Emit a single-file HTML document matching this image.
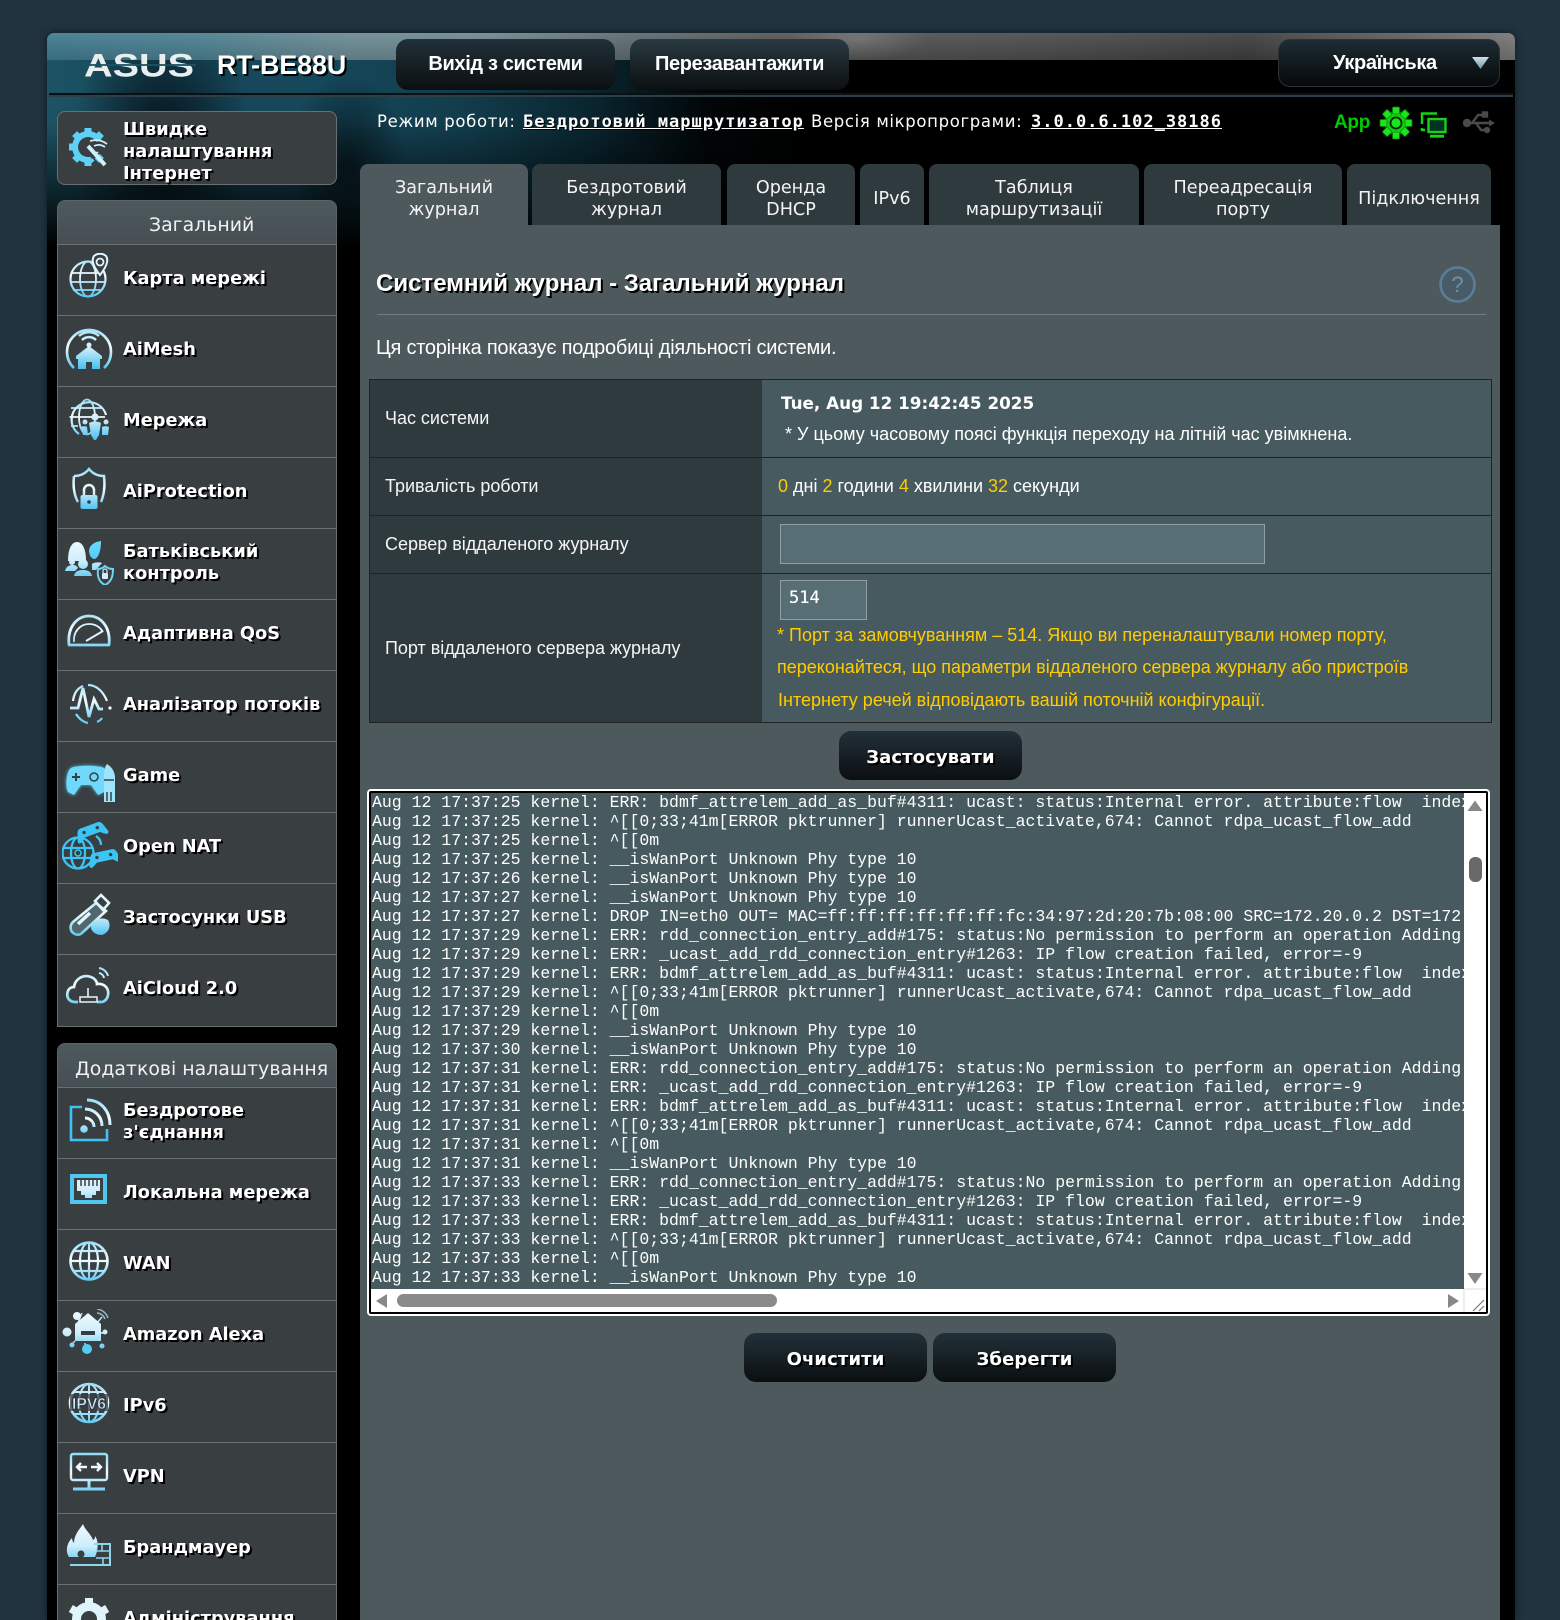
<!DOCTYPE html>
<html lang="uk"><head><meta charset="utf-8"><title>RT-BE88U</title>
<style>
html,body{margin:0;padding:0;width:1560px;height:1620px;overflow:hidden}
body{background:#21333e;position:relative;font-family:"Liberation Sans",sans-serif;color:#fff}
#root{position:absolute;left:0;top:0;width:1560px;height:1620px;overflow:hidden}
.a{position:absolute;white-space:nowrap}
#wrap{position:absolute;left:47px;top:33px;width:1468px;height:1587px;background:#000;border-radius:7px 7px 0 0;box-shadow:0 0 8px #101c24;overflow:hidden}
#b1{position:absolute;left:0;top:0;width:1468px;height:260px;background:
radial-gradient(ellipse 90px 130px at 115px 110px,rgba(3,12,18,.9),rgba(3,12,18,0) 100%),
radial-gradient(ellipse 60px 90px at 300px 130px,rgba(0,0,0,.6),rgba(0,0,0,0)),
linear-gradient(90deg,#1c5364 0,#174658 120px,#15485b 280px,#123c4b 420px,#0a2630 540px,#020608 660px,#000 760px);
-webkit-mask-image:linear-gradient(180deg,#000 90px,rgba(0,0,0,.5) 150px,rgba(0,0,0,0) 215px);}
#b2{position:absolute;left:0;top:0;width:1468px;height:27px;background:
linear-gradient(180deg,rgba(255,255,255,.08),rgba(0,0,0,.12)),
radial-gradient(ellipse 70px 22px at 810px 6px,rgba(255,255,255,.16),rgba(255,255,255,0)),
linear-gradient(90deg,#3f7a8f 0,#4b7f90 150px,#6b8a93 300px,#6e878e 440px,#5f6e73 560px,#555 720px,#4b4b4b 1000px,#3d3d3d 1200px,#6f6f6f 1440px,#777 100%)}
#ln{position:absolute;left:2px;width:1464px;top:60px;height:2px;background:#0a1114;border-bottom:2px solid #2e3e46}
.btn{position:absolute;background:linear-gradient(180deg,#223039,#0b0f11);border-radius:12px;display:flex;align-items:center;justify-content:center;font-weight:bold;box-sizing:border-box}
.h{font-size:20px;letter-spacing:-.35px}
.v{font-family:"DejaVu Sans",sans-serif;font-size:18px;text-shadow:1px 1px 1px #000,2px 2px 0 #000;letter-spacing:.1px;padding-top:3px}
.tab{position:absolute;top:164px;height:61px;box-sizing:border-box;padding-top:9px;background:#2f3a3e;border-radius:8px 8px 0 0;display:flex;align-items:center;justify-content:center;text-align:center;font:17.6px/22px "DejaVu Sans",sans-serif;color:#f4f4f4}
#tact{background:#4d595d}
#main{position:absolute;left:360px;top:225px;width:1140px;height:1395px;background:#4d595d}
.sb{position:absolute;left:57px;width:280px;box-sizing:border-box;border:1px solid #6a6f72;background:#393e41}
.hd{position:absolute;left:57px;width:280px;box-sizing:border-box;border:1px solid #5c6367;border-bottom:1px solid #7a8084;border-radius:8px 8px 0 0;background:linear-gradient(180deg,#4d595d,#464f53);color:#f2f2f2;font:18.9px "DejaVu Sans",sans-serif}
.row{position:absolute;left:57px;width:280px;height:71px;box-sizing:border-box;border-top:1px solid #6b6f71}
.row b,.qt{position:absolute;left:66px;top:0;height:67px;display:flex;align-items:center;font:bold 17.8px/22px "DejaVu Sans",sans-serif;text-shadow:1px 1px 0 #000,2px 2px 0 #000;white-space:nowrap}
.row svg,.qi{position:absolute;left:8px;top:8px}
.cl{position:absolute;left:369px;width:394px;background:#2f3a3f;box-sizing:border-box;border:1px solid #222;display:flex;align-items:center;padding-left:15px;font-size:18px;letter-spacing:-.02px;color:#f5f5f5}
.cr{position:absolute;left:762px;width:730px;background:#475a5f;box-sizing:border-box;border:1px solid #222;border-left:0}
.t{font-size:18px;letter-spacing:0;color:#fff}
.y,.t.y,.t .y{color:#fc0}
.inp{position:absolute;background:#576e74;border:1px solid #929ea1;box-sizing:border-box}
#lb{position:absolute;left:367px;top:789px;width:1123px;height:527px;box-sizing:border-box;border:2px solid #fff;border-radius:4px;background:#000}
#li{position:absolute;left:2px;top:2px;width:1115px;height:519px;background:#fff;overflow:hidden}
#lt{position:absolute;left:0;top:0;width:1093px;height:496px;background:#475a5f;overflow:hidden;font:16.5px/19px "Liberation Mono",monospace;color:#fff;white-space:pre;padding:0}
#lt div{padding-left:1px;position:relative;top:0}
</style></head><body><div id="root">
<svg width="0" height="0" style="position:absolute"><defs>
<linearGradient id="g" gradientUnits="userSpaceOnUse" x1="0" y1="2" x2="0" y2="46"><stop offset="0" stop-color="#8fdcf5"/><stop offset=".45" stop-color="#f2fbff"/><stop offset="1" stop-color="#49c3f2"/></linearGradient>
<linearGradient id="gw" gradientUnits="userSpaceOnUse" x1="0" y1="2" x2="0" y2="46"><stop offset="0" stop-color="#eefaff"/><stop offset=".5" stop-color="#cfeefb"/><stop offset="1" stop-color="#3fbef0"/></linearGradient>
<linearGradient id="gc" gradientUnits="userSpaceOnUse" x1="0" y1="2" x2="0" y2="46"><stop offset="0" stop-color="#6fdcff"/><stop offset="1" stop-color="#2fb8ef"/></linearGradient>
</defs></svg>

<div id="wrap"><div id="b1"></div><div id="b2"></div><div id="ln"></div></div>

<!-- header -->
<svg class="a" style="left:84px;top:52px" width="112" height="28" viewBox="0 0 112 28"><text x="0" y="24.5" font-family="Liberation Sans" font-weight="bold" font-size="32" textLength="110" lengthAdjust="spacingAndGlyphs" fill="#e9eeef">ASUS</text><rect x="0" y="12" width="112" height="2" fill="#1c5364" opacity=".9"/></svg>
<div class="a" style="left:217px;top:48px;font-weight:bold;font-size:26.8px;line-height:34px;text-shadow:2px 2px 0 #000;letter-spacing:-.05px">RT-BE88U</div>
<div class="btn h" style="left:396px;top:39px;width:219px;height:51px;">Вихід з системи</div>
<div class="btn h" style="left:630px;top:39px;width:219px;height:51px;background:linear-gradient(180deg,#2a3a42,#0b0f11)">Перезавантажити</div>
<div class="btn h" style="left:1278px;top:39px;width:222px;height:48px;border:1px solid #2b3338;padding-right:0;background:linear-gradient(180deg,#1d2c33,#06090a);"><span style="position:absolute;left:54px;top:12px;">Українська</span></div>
<svg class="a" style="left:1472px;top:56px" width="18" height="14"><defs><linearGradient id="tr" x1="0" y1="0" x2="0" y2="1"><stop offset="0" stop-color="#cfe0ea"/><stop offset="1" stop-color="#6f95a8"/></linearGradient></defs><path d="M0 1H17L8.5 13Z" fill="url(#tr)"/></svg>

<div class="a" style="left:377px;top:111px;font:16.5px/22px 'DejaVu Sans',sans-serif;letter-spacing:.65px">Режим роботи:</div>
<div class="a" style="left:523px;top:111px;font:bold 17px/22px 'DejaVu Sans Mono',monospace;letter-spacing:1px;text-decoration:underline;text-shadow:1px 1px 0 #000">Бездротовий маршрутизатор</div>
<div class="a" style="left:811px;top:111px;font:16.5px/22px 'DejaVu Sans',sans-serif;letter-spacing:.65px">Версія мікропрограми:</div>
<div class="a" style="left:1031px;top:111px;font:bold 17px/22px 'DejaVu Sans Mono',monospace;letter-spacing:1px;text-decoration:underline">3.0.0.6.102_38186</div>
<div class="a" style="left:1334px;top:111px;font:bold 19px/24px 'Liberation Sans',sans-serif;color:#0c0;letter-spacing:-.3px">App</div>
<svg class="a" style="left:1379px;top:106px" width="34" height="34" viewBox="0 0 34 34"><g transform="translate(17 17)"><g fill="#1be51b" stroke="#0a7a0a" stroke-width=".8"><circle r="11.5"/><rect x="-3.5" y="-16" width="7" height="7" rx="1"/><rect x="-3.5" y="-16" width="7" height="7" rx="1" transform="rotate(45)"/><rect x="-3.5" y="-16" width="7" height="7" rx="1" transform="rotate(90)"/><rect x="-3.5" y="-16" width="7" height="7" rx="1" transform="rotate(135)"/><rect x="-3.5" y="-16" width="7" height="7" rx="1" transform="rotate(180)"/><rect x="-3.5" y="-16" width="7" height="7" rx="1" transform="rotate(225)"/><rect x="-3.5" y="-16" width="7" height="7" rx="1" transform="rotate(270)"/><rect x="-3.5" y="-16" width="7" height="7" rx="1" transform="rotate(315)"/></g><circle r="8.2" fill="#0ccc0c"/><circle r="6.4" fill="#032503"/><circle r="4.6" fill="#1be51b"/></g></svg>
<svg class="a" style="left:1420px;top:110px" width="30" height="28" viewBox="0 0 30 28" fill="none" stroke="#17d217" stroke-width="2.4"><path d="M2 14V3.5H17"/><path d="M2 18v2h3" /><rect x="8.5" y="9" width="17" height="13" fill="#032"/><path d="M10 26.2H24" stroke-width="3"/></svg>
<svg class="a" style="left:1463px;top:110px" width="33" height="26" viewBox="0 0 33 26" fill="none" stroke="#4a4a4a" stroke-width="2.4"><path d="M4 13H28"/><path d="M9 13L15 5H20M13 13l5 7h4"/><circle cx="4" cy="13" r="3" fill="#4a4a4a"/><rect x="20" y="2.5" width="4" height="4" fill="#4a4a4a"/><circle cx="24" cy="20" r="2" fill="#4a4a4a"/><path d="M26 9.5L32 13l-6 3.5Z" fill="#4a4a4a" stroke="none"/></svg>

<!-- tabs -->
<div id="main"></div>
<div class="tab" id="tact" style="left:360px;width:168px">Загальний<br>журнал</div>
<div class="tab" style="left:532px;width:189px">Бездротовий<br>журнал</div>
<div class="tab" style="left:727px;width:128px">Оренда<br>DHCP</div>
<div class="tab" style="left:860px;width:64px">IPv6</div>
<div class="tab" style="left:929px;width:210px">Таблиця<br>маршрутизації</div>
<div class="tab" style="left:1144px;width:198px">Переадресація<br>порту</div>
<div class="tab" style="left:1347px;width:144px">Підключення</div>

<!-- content -->
<div class="a" style="left:376px;top:268px;font-weight:bold;font-size:24px;line-height:32px;text-shadow:1px 1px 0 #000,2px 2px 0 #000;letter-spacing:0">Системний журнал - Загальний журнал</div>
<svg class="a" style="left:1439px;top:266px" width="37" height="37"><circle cx="18.500" cy="18.500" r="17" fill="#4a5b68" stroke="#5c7d96" stroke-width="2.600"/><text x="18.500" y="26" text-anchor="middle" font-family="Liberation Sans" font-size="22" fill="#6f92aa">?</text></svg>
<div class="a" style="left:377px;top:314px;width:1109px;height:1px;background:#6f7b80"></div>
<div class="a" style="left:376px;top:336px;font-size:20px;line-height:24px;letter-spacing:-.24px;color:#fff">Ця сторінка показує подробиці діяльності системи.</div>

<div class="cl" style="top:379px;height:79px">Час системи</div>
<div class="cr" style="top:379px;height:79px;border-top:1px solid #222"></div>
<div class="a" style="left:781px;top:392px;font:bold 16.8px/22px 'DejaVu Sans',sans-serif">Tue, Aug 12 19:42:45 2025</div>
<div class="a t" style="left:785px;top:423px;line-height:22px">* У цьому часовому поясі функція переходу на літній час увімкнена.</div>
<div class="cl" style="top:457px;height:59px">Тривалість роботи</div>
<div class="cr" style="top:457px;height:59px;border-top:1px solid #222"></div>
<div class="a t" style="left:778px;top:475px;line-height:22px"><span class="y">0</span> дні <span class="y">2</span> години <span class="y">4</span> хвилини <span class="y">32</span> секунди</div>
<div class="cl" style="top:515px;height:59px">Сервер віддаленого журналу</div>
<div class="cr" style="top:515px;height:59px;border-top:1px solid #222"></div>
<div class="inp" style="left:780px;top:524px;width:485px;height:40px"></div>
<div class="cl" style="top:573px;height:150px">Порт віддаленого сервера журналу</div>
<div class="cr" style="top:573px;height:150px;border-top:1px solid #222"></div>
<div class="inp" style="left:780px;top:580px;width:87px;height:40px"></div>
<div class="a" style="left:789px;top:587px;font:17px/22px 'DejaVu Sans Mono',monospace;text-shadow:0 0 .4px #fff">514</div>
<div class="a t y" style="left:777px;top:624px;line-height:22px">* Порт за замовчуванням – 514. Якщо ви переналаштували номер порту,</div>
<div class="a t y" style="left:777px;top:656px;line-height:22px">переконайтеся, що параметри віддаленого сервера журналу або пристроїв</div>
<div class="a t y" style="left:778px;top:689px;line-height:22px">Інтернету речей відповідають вашій поточній конфігурації.</div>

<div class="btn v" style="left:839px;top:731px;width:183px;height:49px">Застосувати</div>

<div id="lb"><div id="li"><div id="lt"><div>Aug 12 17:37:25 kernel: ERR: bdmf_attrelem_add_as_buf#4311: ucast: status:Internal error. attribute:flow  index:0
Aug 12 17:37:25 kernel: ^[[0;33;41m[ERROR pktrunner] runnerUcast_activate,674: Cannot rdpa_ucast_flow_add
Aug 12 17:37:25 kernel: ^[[0m
Aug 12 17:37:25 kernel: __isWanPort Unknown Phy type 10
Aug 12 17:37:26 kernel: __isWanPort Unknown Phy type 10
Aug 12 17:37:27 kernel: __isWanPort Unknown Phy type 10
Aug 12 17:37:27 kernel: DROP IN=eth0 OUT= MAC=ff:ff:ff:ff:ff:ff:fc:34:97:2d:20:7b:08:00 SRC=172.20.0.2 DST=172.20.0.255
Aug 12 17:37:29 kernel: ERR: rdd_connection_entry_add#175: status:No permission to perform an operation Adding
Aug 12 17:37:29 kernel: ERR: _ucast_add_rdd_connection_entry#1263: IP flow creation failed, error=-9
Aug 12 17:37:29 kernel: ERR: bdmf_attrelem_add_as_buf#4311: ucast: status:Internal error. attribute:flow  index:0
Aug 12 17:37:29 kernel: ^[[0;33;41m[ERROR pktrunner] runnerUcast_activate,674: Cannot rdpa_ucast_flow_add
Aug 12 17:37:29 kernel: ^[[0m
Aug 12 17:37:29 kernel: __isWanPort Unknown Phy type 10
Aug 12 17:37:30 kernel: __isWanPort Unknown Phy type 10
Aug 12 17:37:31 kernel: ERR: rdd_connection_entry_add#175: status:No permission to perform an operation Adding
Aug 12 17:37:31 kernel: ERR: _ucast_add_rdd_connection_entry#1263: IP flow creation failed, error=-9
Aug 12 17:37:31 kernel: ERR: bdmf_attrelem_add_as_buf#4311: ucast: status:Internal error. attribute:flow  index:0
Aug 12 17:37:31 kernel: ^[[0;33;41m[ERROR pktrunner] runnerUcast_activate,674: Cannot rdpa_ucast_flow_add
Aug 12 17:37:31 kernel: ^[[0m
Aug 12 17:37:31 kernel: __isWanPort Unknown Phy type 10
Aug 12 17:37:33 kernel: ERR: rdd_connection_entry_add#175: status:No permission to perform an operation Adding
Aug 12 17:37:33 kernel: ERR: _ucast_add_rdd_connection_entry#1263: IP flow creation failed, error=-9
Aug 12 17:37:33 kernel: ERR: bdmf_attrelem_add_as_buf#4311: ucast: status:Internal error. attribute:flow  index:0
Aug 12 17:37:33 kernel: ^[[0;33;41m[ERROR pktrunner] runnerUcast_activate,674: Cannot rdpa_ucast_flow_add
Aug 12 17:37:33 kernel: ^[[0m
Aug 12 17:37:33 kernel: __isWanPort Unknown Phy type 10</div></div>
<svg style="position:absolute;left:0;top:0" width="1115" height="519">
<path d="M1096.500 18L1104 7.500L1111.500 18Z" fill="#888"/>
<rect x="1098" y="64" width="13" height="25" rx="6" fill="#696969"/>
<path d="M1096.500 480L1104 491L1111.500 480Z" fill="#888"/>
<path d="M16 503L5 510L16 517V503Z" fill="#888" transform="translate(0,-2)"/>
<rect x="26" y="501" width="380" height="13" rx="6.500" fill="#8a8a8a"/>
<path d="M1077 501L1088 508L1077 515Z" fill="#888"/>
<path d="M1093 496H1115M1093 496V519" stroke="#ddd" fill="none"/>
<path d="M1102 518L1113 507M1108 518L1113 513" stroke="#777" stroke-width="1.200" fill="none"/>
</svg>
</div></div>

<div class="btn v" style="left:744px;top:1333px;width:183px;height:49px">Очистити</div>
<div class="btn v" style="left:933px;top:1333px;width:183px;height:49px">Зберегти</div>

<!-- sidebar -->
<div class="sb" style="top:111px;height:74px;border-radius:8px"></div>
<svg class="a" style="left:68px;top:124px" width="48" height="48" viewBox="0 0 48 48" fill="none"><g transform="translate(20 23)" fill="#5fd0f7"><path d="M11.300-6.500A13 13 0 1 0 3.400 12.600" stroke="#5fd0f7" stroke-width="6" fill="none"/><rect x="-3.500" y="-19" width="7" height="6"/><rect x="-3.500" y="-19" width="7" height="6" transform="rotate(45)"/><rect x="-3.500" y="-19" width="7" height="6" transform="rotate(-45)"/><rect x="-3.500" y="-19" width="7" height="6" transform="rotate(-90)"/><rect x="-3.500" y="-19" width="7" height="6" transform="rotate(-135)"/><rect x="-3.500" y="-19" width="7" height="6" transform="rotate(180)"/><rect x="-3.500" y="-19" width="7" height="6" transform="rotate(135)"/></g><path d="M22 17c7-2 13 0 17 3M26 22c4-2 8-1 11 1M30 28l-4 3" stroke="#cfeffb" stroke-width="1.800"/><path d="M20 22L37 41" stroke="#cfeffb" stroke-width="4"/><path d="M24 34l2.500 2.500L24 39l-2.500-2.500Z" fill="#5fd0f7"/></svg>
<div class="qt" style="left:123px;top:119px;height:66px">Швидке<br>налаштування<br>Інтернет</div>

<div class="hd" style="top:200px;height:45px;line-height:49px;padding-left:91px">Загальний</div>
<div class="sb" style="top:244px;height:783px;border-top:0"></div>

<div class="row" style="top:244px"><svg width="48" height="48" viewBox="0 0 48 48" fill="none" stroke="url(#g)" stroke-width="1.800"><circle cx="23" cy="26" r="17.500" stroke-width="2.200"/><ellipse cx="23" cy="26" rx="8" ry="17.500"/><path d="M6 20H33M5.500 29H40M8 37H37"/><path d="M29 3a9 9 0 0 1 12 0c3 4 1 10-6 19c-7-9-9-15-6-19Z" fill="#393e41" stroke="#dff6ff" stroke-width="2"/><circle cx="35" cy="9" r="3.500" stroke="#dff6ff"/></svg><b>Карта мережі</b></div>

<div class="row" style="top:315px"><svg width="48" height="48" viewBox="0 0 48 48" fill="none" stroke="url(#g)" stroke-width="2.500"><path d="M9 44A22 22 0 1 1 39 44" stroke-width="2.600"/><path d="M17 16a10 10 0 0 1 14 0M14 12a15 15 0 0 1 20 0"/><circle cx="24" cy="21" r="2.500" fill="url(#gw)" stroke="none"/><path d="M24 22L37 32V35H35V45H27V38H21V45H13V35H11V32Z" fill="url(#gw)" stroke="none"/></svg><b>AiMesh</b></div>

<div class="row" style="top:386px"><svg width="48" height="48" viewBox="0 0 48 48" fill="none" stroke="url(#g)" stroke-width="1.800"><path d="M14 39A17.500 17.500 0 1 1 41 20" stroke-width="2.200"/><ellipse cx="22" cy="22" rx="8" ry="17.500"/><path d="M4.500 22H40M6 13H37M6 31H13"/><g fill="url(#gw)" stroke="none"><circle cx="30" cy="22" r="3.600"/><path d="M24 28c3-2 9-2 12 0l-2 12-3 5h-2l-3-5Z"/><circle cx="20" cy="27" r="2.500"/><path d="M16 32c1-1 5-1 6 0l1 8h-5Z"/><circle cx="41" cy="27" r="2.500"/><path d="M37 32c1-1 6-1 7 0l-1 8h-6Z"/></g></svg><b>Мережа</b></div>

<div class="row" style="top:457px"><svg width="48" height="48" viewBox="0 0 48 48" fill="none" stroke="url(#g)" stroke-width="2.500"><path d="M9 10c6 0 11-2 15-7c4 5 9 7 15 7c1 9 0 19-3 26M9 10c-1 9 0 19 4 26"/><path d="M19 30v-6a5 5 0 0 1 10 0v6"/><rect x="15.500" y="29" width="17" height="14" rx="2" fill="url(#gw)" stroke="none"/><circle cx="24" cy="36" r="1.800" fill="#393e41" stroke="none"/></svg><b>AiProtection</b></div>

<div class="row" style="top:528px"><svg width="50" height="48" viewBox="0 0 50 48" fill="none"><g fill="url(#gw)"><path d="M3 24c0-13 4-19 9-19s9 6 9 19Z"/><path d="M24 13c1-5 5-8 12-9c0 9-2 16-6 18c-4 0-6-4-6-9Z" fill="url(#gc)"/><path d="M0 34c1-5 5-6 8-6c2 0 4 1 5 3l-3 3Z"/><circle cx="7" cy="25" r="3"/><circle cx="18" cy="27" r="5"/><path d="M9 39c1-5 5-6 9-6s8 1 9 6Z"/><path d="M27 27c2-2 8-2 10-1l-6 7h-4Z"/></g><path d="M33 32c3 0 5-1 7-3c2 2 5 3 8 3c0 8-2 13-8 16c-6-3-8-8-7-16Z" fill="#393e41" stroke="#6fd3f5" stroke-width="2"/><rect x="37" y="36" width="6" height="6" rx="1" fill="#cfeefb"/><path d="M38 36v-2a2 2 0 0 1 4 0v2" stroke="#cfeefb" stroke-width="1.200"/></svg><b>Батьківський<br>контроль</b></div>

<div class="row" style="top:599px"><svg width="48" height="48" viewBox="0 0 48 48" fill="none" stroke="url(#g)" stroke-width="2.800"><path d="M4 37C2 18 13 8 24 8s22 10 20 29Z" stroke-linejoin="round"/><path d="M9 34c-1-10 6-18 15-18c6 0 11 3 14 8" stroke-width="1.800"/><path d="M21 33L38 23" stroke="#dff6ff" stroke-width="2"/></svg><b>Адаптивна QoS</b></div>

<div class="row" style="top:670px"><svg width="48" height="48" viewBox="0 0 48 48" fill="none" stroke="url(#g)" stroke-width="2.200"><path d="M5 29H13L18 9L24 38L29 20L34 30H38" stroke-width="2.800"/><path d="M23 6c8 0 15 6 19 16M11 35c2 3 6 8 12 9M8 22C9 14 13 9 18 7M32 43c2-1 4-2 5-4" /><circle cx="45" cy="29" r="1.600" fill="#fff" stroke="none"/></svg><b>Аналізатор потоків</b></div>

<div class="row" style="top:741px"><svg width="56" height="54" viewBox="0 0 56 54" style="left:4px"><defs><filter id="bl" x="-20%" y="-20%" width="140%" height="140%"><feGaussianBlur stdDeviation="1.800"/></filter></defs><g transform="translate(0 4)"><path d="M10 14c5-3 28-3 33 0c3 4 3 18 0 24l-6 3-7-10H20l-7 10-6-3C4 32 5 18 10 14Z" fill="#4fc9ef" filter="url(#bl)"/><path d="M10 14c5-3 28-3 33 0c3 4 3 18 0 24l-6 3-7-10H20l-7 10-6-3C4 32 5 18 10 14Z" fill="#6fd8fb"/><path d="M15 19v8M11 23h8" stroke="#393e41" stroke-width="2"/><circle cx="33" cy="23" r="4" fill="none" stroke="#393e41" stroke-width="1.500"/></g><path d="M46 14c5 3 8 8 8 14v24H43V28c0-6 0-10 3-14Z" fill="#9fe4fa"/><path d="M43 30h10M46 42v9M50 42v9" stroke="#393e41" stroke-width="1.500"/></svg><b>Game</b></div>

<div class="row" style="top:812px"><svg width="56" height="50" viewBox="0 0 56 50" style="left:5px"><g fill="none" stroke="#3cc4f5" stroke-width="2.300"><circle cx="16" cy="32" r="15.500"/><ellipse cx="16" cy="32" rx="7" ry="15.500"/><path d="M1 27H31M1 37H31"/><path d="M34 15c3 2 5 5 5 9"/></g><circle cx="16" cy="32" r="3" fill="none" stroke="#3cc4f5" stroke-width="1.500"/><g fill="#3cc4f5" transform="translate(29 10) rotate(-20)"><path d="M-9-6H9c3 0 4 2 5 5l2 6c1 3-2 4-4 2l-4-3H-8l-4 3c-2 2-5 1-4-2l2-6c1-3 2-5 5-5Z"/><circle cx="-7" cy="-1" r="1.700" fill="#393e41"/><circle cx="7" cy="-1" r="1.700" fill="#393e41"/></g><g fill="#3cc4f5" transform="translate(42 36) rotate(-12)"><path d="M-9-6H9c3 0 4 2 5 5l2 6c1 3-2 4-4 2l-4-3H-8l-4 3c-2 2-5 1-4-2l2-6c1-3 2-5 5-5Z"/><circle cx="-7" cy="-1" r="1.700" fill="#393e41"/><circle cx="7" cy="-1" r="1.700" fill="#393e41"/></g></svg><b>Open NAT</b></div>

<div class="row" style="top:883px"><svg width="48" height="48" viewBox="0 0 48 48" fill="none" stroke="url(#g)" stroke-width="2.600"><path d="M31 11L8 30c-3 3-3 7-1 10c3 3 7 4 10 1L41 19Z" fill="#9fdff5" fill-opacity=".25"/><path d="M13 32L25 21" stroke="#dff6ff" stroke-width="3.500"/><path d="M30 9L36 3L44 11L38 18Z" stroke="#dff6ff"/><path d="M26 36a11 9 0 0 1 17-8c3 5 2 12-6 15c-6 0-10-3-11-7Z" fill="url(#gw)" stroke="none"/></svg><b>Застосунки USB</b></div>

<div class="row" style="top:954px"><svg width="48" height="48" viewBox="0 0 48 48" fill="none" stroke="url(#g)" stroke-width="2.700"><path d="M13 39H9C3 38 1 33 3 28c1-3 4-4 6-4c1-8 9-13 17-10c3 1 6 4 6 7c5-1 10 2 11 7c1 6-2 10-6 11h-5"/><path d="M34 5a11 11 0 0 1 9 8M34 10a6 6 0 0 1 5 5" stroke-width="2"/><path d="M23 25v9" stroke="#dff6ff" stroke-width="1.600"/><rect x="15" y="34" width="17" height="5" stroke="#dff6ff" stroke-width="1.500"/></svg><b>AiCloud 2.0</b></div>

<div class="hd" style="top:1043px;height:45px;line-height:50px;padding-left:17px;">Додаткові налаштування</div>
<div class="sb" style="top:1087px;height:540px;border-top:0"></div>

<div class="row" style="top:1087px"><svg width="48" height="48" viewBox="0 0 48 48" fill="none" stroke="url(#g)" stroke-width="2.600"><path d="M17 11H6V44H42V33" stroke="#3fc1f1"/><path d="M22 4c14 0 23 11 23 25" stroke-width="3"/><path d="M20 13c9 0 17 7 17 17M20 22c5 0 9 4 9 9" stroke-width="3"/><circle cx="19" cy="33" r="3.800" fill="url(#gw)" stroke="none"/></svg><b>Бездротове<br>з'єднання</b></div>

<div class="row" style="top:1158px"><svg width="48" height="48" viewBox="0 0 48 48"><rect x="5" y="7" width="37" height="30" fill="#4fc6ee"/><rect x="9" y="11" width="29" height="22" fill="#393e41"/><path d="M12 13H35V24H31V28H27V31H20V28H16V24H12Z" fill="url(#gw)"/><path d="M16 13v6M20 13v6M24 13v6M28 13v6M32 13v6" stroke="#393e41" stroke-width="1.500"/></svg><b>Локальна мережа</b></div>

<div class="row" style="top:1229px"><svg width="48" height="48" viewBox="0 0 48 48" fill="none" stroke="url(#g)" stroke-width="2.200"><circle cx="24" cy="23" r="18.500" stroke-width="2.600"/><ellipse cx="24" cy="23" rx="9" ry="18.500"/><path d="M24 4V42M6 23H42M9 13H39M9 33H39" stroke-width="2.200"/></svg><b>WAN</b></div>

<div class="row" style="top:1300px"><svg width="50" height="48" viewBox="0 0 50 48" fill="none" style="left:4px"><g stroke="url(#g)" stroke-width="1.500"><path d="M21 4L16 16M10 22H3M38 24H45M24 34V40M14 32L9 37M36 14L41 8"/></g><g fill="url(#gw)"><circle cx="16" cy="7" r="4"/><circle cx="6" cy="23" r="4.500"/><circle cx="44" cy="23" r="2.500"/><circle cx="26" cy="40" r="5" fill="#57ccf2"/><circle cx="11" cy="36" r="2.500"/><circle cx="41" cy="37" r="2.500"/><path d="M27 4L40 15V32H14V15Z"/></g><rect x="20" y="22" width="14" height="4" fill="#393e41"/><path d="M36 4a9 9 0 0 1 8 6M36 0a13 13 0 0 1 11 9" stroke="#8fb8c6" stroke-width="1.500"/></svg><b>Amazon Alexa</b></div>

<div class="row" style="top:1371px"><svg width="48" height="48" viewBox="0 0 48 48" fill="none" stroke="url(#g)" stroke-width="2"><circle cx="24" cy="23" r="19" stroke-width="2.600"/><ellipse cx="24" cy="23" rx="10" ry="19"/><path d="M24 4V42M9 12H39M9 34H39"/><rect x="5" y="14" width="38" height="17" fill="#393e41" stroke="none" opacity=".75"/><text x="24" y="29" text-anchor="middle" font-family="Liberation Sans" font-weight="bold" font-size="15.500" fill="url(#gw)" stroke="#1f2a30" stroke-width=".5" textLength="34" lengthAdjust="spacingAndGlyphs">IPV6</text></svg><b>IPv6</b></div>

<div class="row" style="top:1442px"><svg width="48" height="48" viewBox="0 0 48 48" fill="none" stroke="url(#g)" stroke-width="2.400"><rect x="6" y="3" width="36" height="26" rx="2"/><path d="M24 29V37M8 38H40" stroke-width="3"/><path d="M13 16H22M16 12l-4 4 4 4M26 16H35M32 12l4 4-4 4" stroke="#eefaff"/></svg><b>VPN</b></div>

<div class="row" style="top:1513px"><svg width="48" height="48" viewBox="0 0 48 48" fill="none"><path d="M18 2c2 6 8 10 10 16c2-1 2-2 2-4c4 5 3 15 0 21H4c-4-6-2-14 3-19c0 2 1 4 2 5c0-8 5-13 9-19Z" fill="url(#gw)"/><circle cx="16" cy="32" r="3.500" fill="#393e41"/><path d="M29 22H45V43H5" stroke="#8fd4ee" stroke-width="2"/><path d="M31 29H45M31 36H45M37 22V29M38 36V43" stroke="#8fd4ee" stroke-width="1.600"/></svg><b>Брандмауер</b></div>

<div class="row" style="top:1584px"><svg width="48" height="48" viewBox="0 0 48 48"><g transform="translate(24 26)"><path d="M-17 0a17 17 0 1 0 34 0a17 17 0 1 0-34 0ZM-8 0a8 8 0 1 1 16 0a8 8 0 1 1-16 0Z" fill-rule="evenodd" fill="#dff4fb"/><g fill="#dff4fb"><rect x="-4" y="-21" width="8" height="7"/><rect x="-4" y="-21" width="8" height="7" transform="rotate(60)"/><rect x="-4" y="-21" width="8" height="7" transform="rotate(120)"/><rect x="-4" y="-21" width="8" height="7" transform="rotate(180)"/><rect x="-4" y="-21" width="8" height="7" transform="rotate(240)"/><rect x="-4" y="-21" width="8" height="7" transform="rotate(300)"/></g></g></svg><b>Адміністрування</b></div>

</div></body></html>
